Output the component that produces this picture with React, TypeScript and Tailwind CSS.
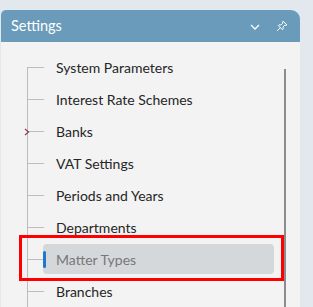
import React from "react";

const items = [
  "System Parameters",
  "Interest Rate Schemes",
  "Banks",
  "VAT Settings",
  "Periods and Years",
  "Departments",
  "Matter Types",
  "Branches",
];

export default function App() {
  return (
    <div
      className="w-[313px] h-[307px] bg-[#e3e8ee] overflow-hidden pt-[10px] pl-[1px]"
      style={{ fontFamily: 'Lato, "Noto Sans", sans-serif' }}
    >
      <div className="w-[299px] h-[297px] bg-[#f3f3f3] rounded-tl-[5px] rounded-tr-[9px] overflow-hidden flex flex-col">
        <div className="h-[32px] bg-[#6a9bba] flex items-center pl-[10px] pr-[12px] shrink-0">
          <span className="text-white text-[14.5px] leading-none">Settings</span>
          <div className="ml-auto flex items-center gap-[16px]">
            <svg width="10" height="6" viewBox="0 0 10 6" className="mt-[1px]">
              <path d="M1 1 L5 5 L9 1" fill="none" stroke="#ffffff" strokeWidth="1.3" />
            </svg>
            <svg width="12" height="12" viewBox="0 0 16 16">
              <path
                d="M9.5 1.5 L14.5 6.5 L13.3 7.2 L11.8 6.9 L9.3 9.4 L9.6 12 L8.6 13 L3 7.4 L4 6.4 L6.6 6.7 L9.1 4.2 L8.8 2.7 Z M5.8 10.2 L1.5 14.5"
                fill="none"
                stroke="#ffffff"
                strokeWidth="1.3"
                strokeLinejoin="round"
              />
            </svg>
          </div>
        </div>
        <div className="relative flex-1 flex">
          <div className="relative flex-1 pt-[9px]">
            <div className="absolute left-[26px] top-[25px] bottom-0 w-px bg-[#bdbdbd]" />
            {items.map((label) => {
              const selected = label === "Matter Types";
              return (
                <div key={label} className="relative h-[32px] flex items-center">
                  <div className="absolute left-[26px] top-[16px] w-[17px] h-px bg-[#bdbdbd]" />
                  {label === "Banks" && (
                    <svg
                      width="6"
                      height="8"
                      viewBox="0 0 6 8"
                      className="absolute left-[23px] top-[13px]"
                    >
                      <path d="M1 1 L4.5 4 L1 7" fill="none" stroke="#8a3e52" strokeWidth="1.2" />
                    </svg>
                  )}
                  {selected ? (
                    <div className="ml-[42px] w-[231px] h-[30px] bg-[#d5d8db] rounded-[4px] flex items-center relative">
                      <div className="absolute left-0 top-[7px] w-[3px] h-[17px] bg-[#1f78c8] rounded-[2px]" />
                      <span className="pl-[13px] text-[14px] text-[#777777]">{label}</span>
                    </div>
                  ) : (
                    <span className="ml-[55px] text-[14px] text-[#262626]">{label}</span>
                  )}
                  {selected && (
                    <div className="absolute left-[18px] top-[-8px] w-[265px] h-[46px] border-[3px] border-[#ff0000]" />
                  )}
                </div>
              );
            })}
          </div>
          <div className="absolute left-[283px] top-[27px] bottom-0 w-[2px] bg-[#8c8c8c]" />
        </div>
      </div>
    </div>
  );
}
